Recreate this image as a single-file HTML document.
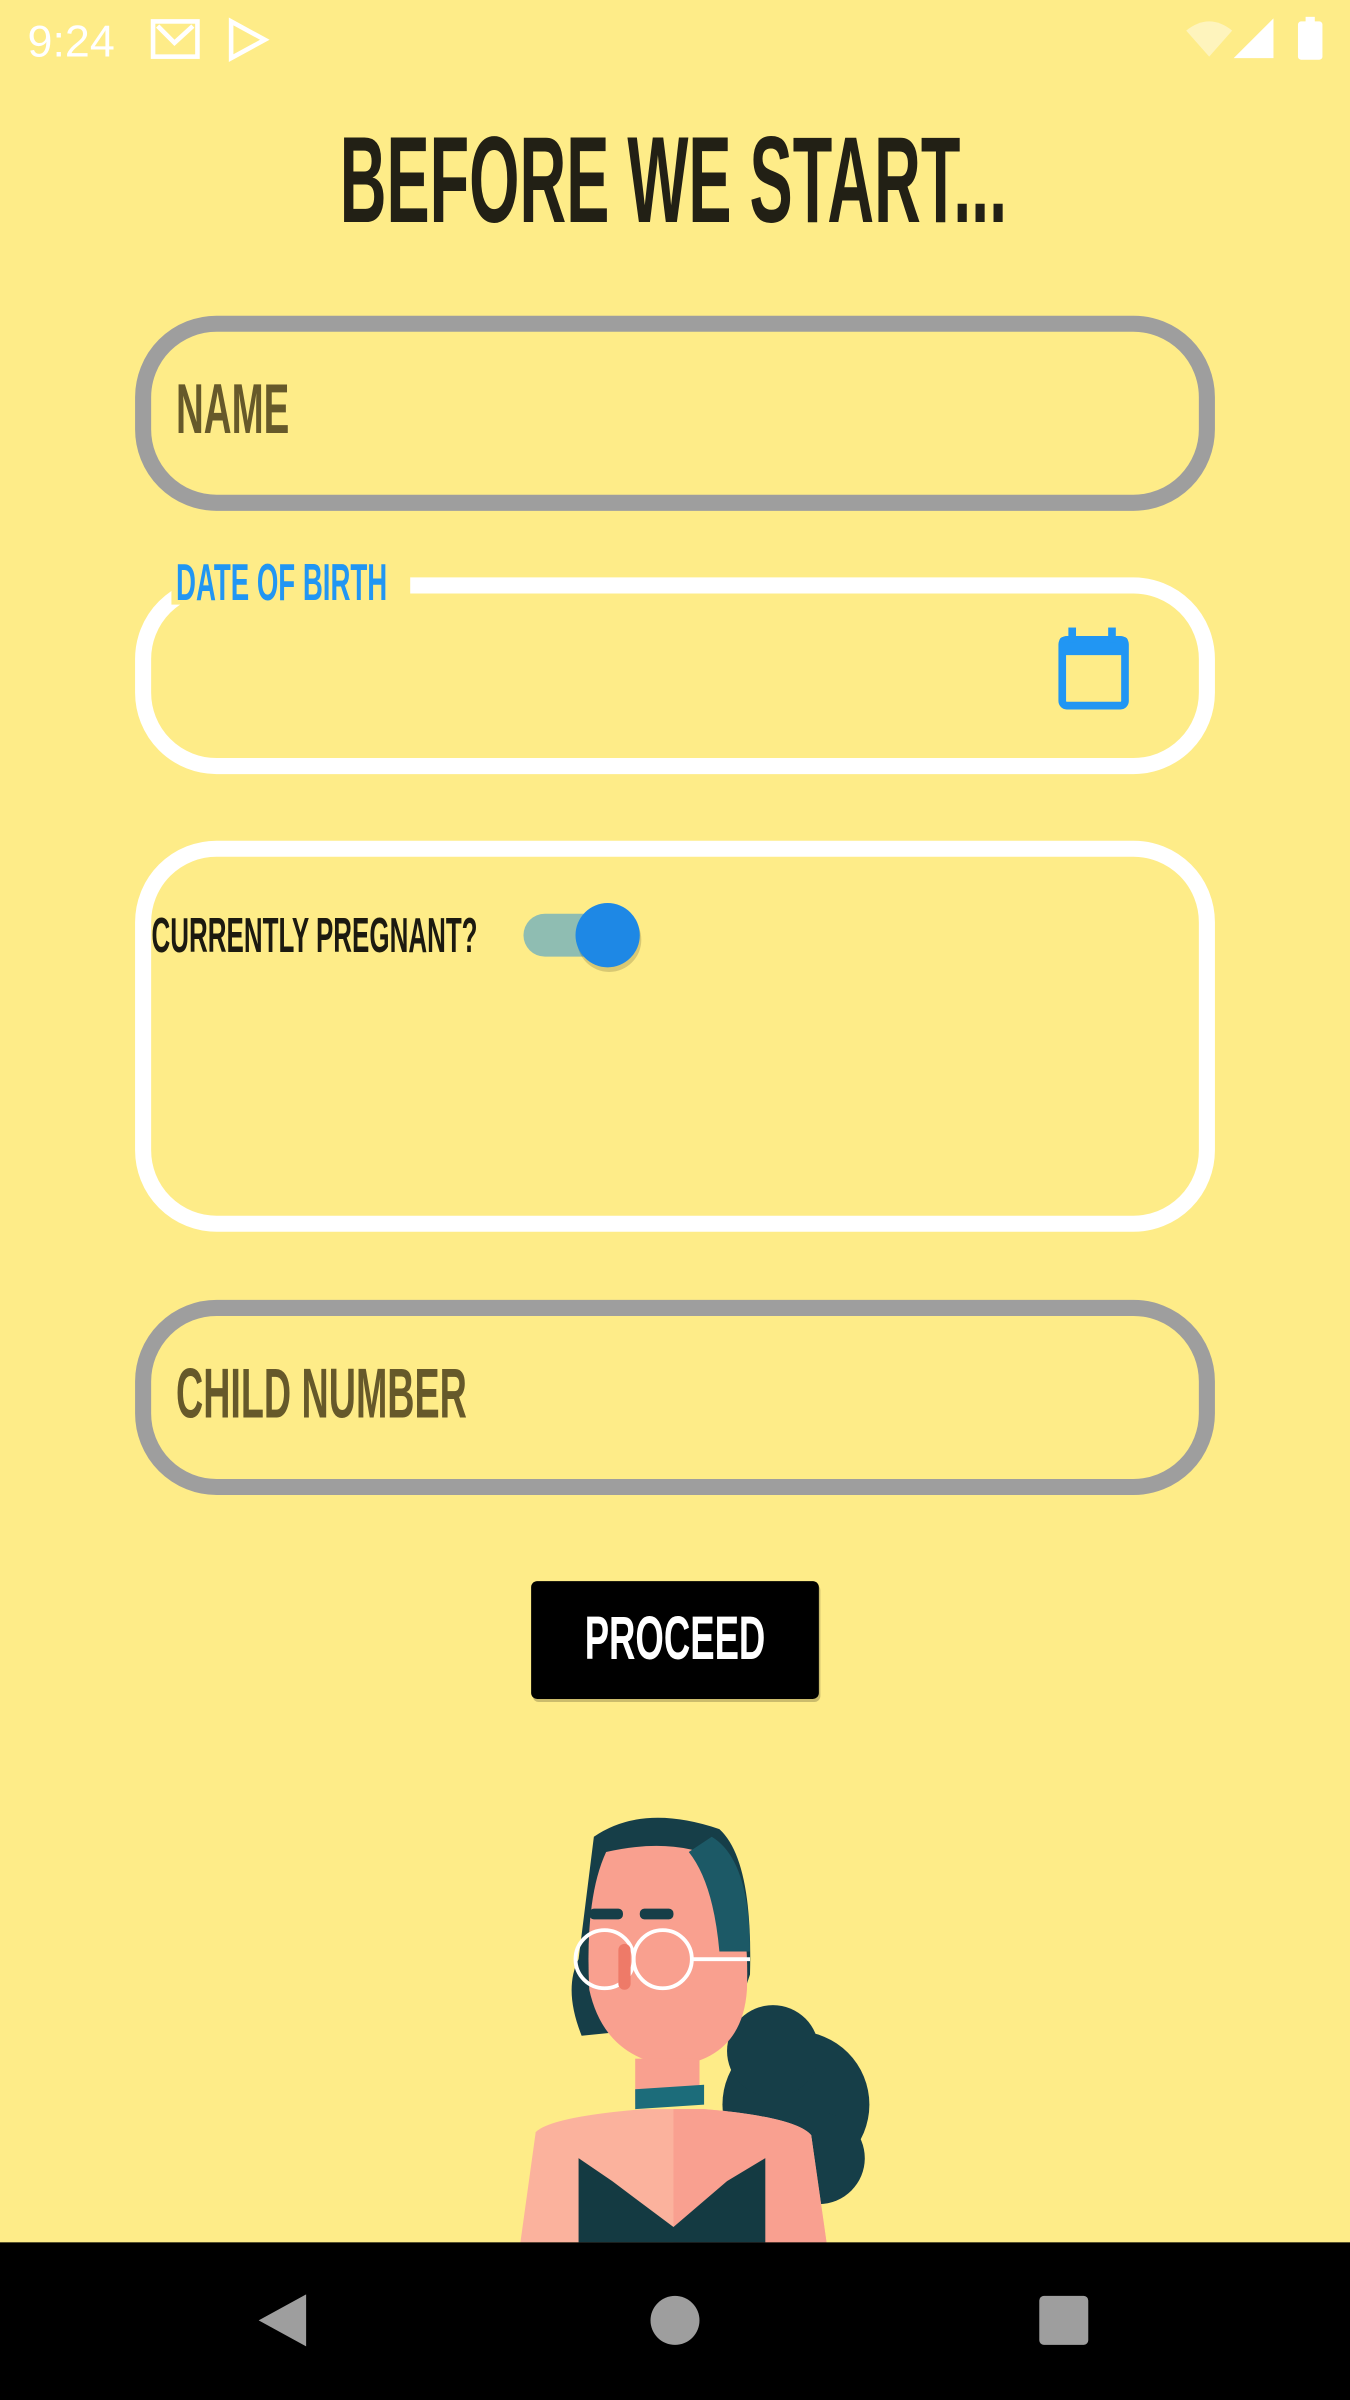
<!DOCTYPE html>
<html><head><meta charset="utf-8"><style>
html,body{margin:0;padding:0;background:#FEEC88;width:1350px;height:2400px;overflow:hidden}
svg{display:block}
text{font-family:"Liberation Sans",sans-serif;font-weight:bold}
</style></head><body>
<svg width="1350" height="2400" viewBox="0 0 882 1568" xmlns="http://www.w3.org/2000/svg">
<rect width="882" height="1568" fill="#FEEC88"/>
<!-- status bar -->
<text x="18" y="37" font-size="29" font-weight="normal" style="font-weight:normal" fill="#fff" textLength="57" lengthAdjust="spacingAndGlyphs">9:24</text>
<rect x="100" y="14" width="29" height="23" fill="none" stroke="#fff" stroke-width="3"/>
<path d="M103 17 L114 28 L126 17" fill="none" stroke="#fff" stroke-width="3"/>
<path d="M151 14 L173 26 L151 38 Z" fill="none" stroke="#fff" stroke-width="3"/>
<path d="M775 20 Q790 8 805 20 L790 37 Z" fill="#fff" opacity="0.45"/>
<path d="M806 38 L832 12 L832 38 Z" fill="#fff"/>
<rect x="848" y="14" width="16" height="25" rx="2" fill="#fff"/>
<rect x="853" y="11" width="6" height="4" fill="#fff"/>
<!-- title -->
<text x="222" y="145" font-size="80" fill="#222015" textLength="436" lengthAdjust="spacingAndGlyphs">BEFORE WE START...</text>
<!-- name -->
<rect x="93.5" y="211.5" width="695" height="117" rx="48" fill="none" stroke="#9E9E9E" stroke-width="10.5"/>
<text x="115" y="283" font-size="46" fill="#66592A" textLength="74" lengthAdjust="spacingAndGlyphs">NAME</text>
<!-- dob -->
<rect x="93.5" y="382.5" width="695" height="118" rx="48" fill="none" stroke="#fff" stroke-width="10.5"/>
<rect x="112" y="370" width="156" height="25" fill="#FEEC88"/>
<text x="115" y="392" font-size="34" fill="#2196F3" textLength="138" lengthAdjust="spacingAndGlyphs">DATE OF BIRTH</text>
<rect x="694" y="418" width="41" height="43" rx="3" fill="none" stroke="#2196F3" stroke-width="5"/>
<rect x="692" y="416" width="45" height="12" rx="3" fill="#2196F3"/>
<rect x="698" y="410" width="5" height="10" fill="#2196F3"/>
<rect x="724" y="410" width="5" height="10" fill="#2196F3"/>
<!-- pregnant -->
<rect x="93.5" y="554.5" width="695" height="245" rx="48" fill="none" stroke="#fff" stroke-width="10.5"/>
<text x="99" y="622" font-size="32" fill="#1c1a10" textLength="213" lengthAdjust="spacingAndGlyphs">CURRENTLY PREGNANT?</text>
<rect x="342" y="597" width="68" height="28" rx="14" fill="#8FBDB2"/>
<circle cx="398" cy="614" r="21" fill="#000" opacity="0.15"/>
<circle cx="397" cy="611" r="21" fill="#1E88E5"/>
<!-- child -->
<rect x="93.5" y="854.5" width="695" height="117" rx="48" fill="none" stroke="#9E9E9E" stroke-width="10.5"/>
<text x="115" y="926" font-size="46" fill="#66592A" textLength="190" lengthAdjust="spacingAndGlyphs">CHILD NUMBER</text>
<!-- proceed -->
<rect x="348" y="1035" width="188" height="77" rx="4" fill="#000" opacity="0.2"/>
<rect x="347" y="1033" width="188" height="77" rx="4" fill="#000"/>
<text x="382" y="1084" font-size="40" fill="#fff" textLength="118" lengthAdjust="spacingAndGlyphs">PROCEED</text>
<!-- girl -->
<g>
<circle cx="520" cy="1375" r="48" fill="#163E48"/>
<circle cx="505" cy="1340" r="30" fill="#163E48"/>
<circle cx="535" cy="1410" r="30" fill="#163E48"/>
<path d="M388 1200 Q420 1178 470 1195 Q492 1215 490 1290 L480 1320 L380 1330 Q368 1300 378 1280 Z" fill="#163E48"/>
<path d="M396 1210 Q440 1200 470 1215 Q490 1240 488 1300 Q485 1345 440 1350 Q395 1345 385 1300 Q382 1240 396 1210 Z" fill="#F9A08F"/>
<path d="M465 1200 Q490 1215 490 1275 L470 1275 Q466 1230 450 1210 Z" fill="#1C5966"/>
<rect x="415" y="1345" width="42" height="30" fill="#F9A08F"/>
<path d="M415 1365 L460 1362 L460 1375 L415 1378 Z" fill="#1C6C7A"/>
<path d="M350 1393 Q360 1383 420 1378 L460 1378 Q520 1383 530 1395 L540 1465 L340 1465 Z" fill="#FBB29D"/>
<path d="M440 1378 L460 1378 Q520 1383 530 1395 L540 1465 L440 1465 Z" fill="#F9A090"/>
<path d="M378 1465 L378 1410 L400 1425 L440 1455 L475 1425 L500 1410 L500 1465 Z" fill="#143A42"/>
<circle cx="395" cy="1280" r="19" fill="none" stroke="#fff" stroke-width="2.5"/>
<circle cx="433" cy="1280" r="19" fill="none" stroke="#fff" stroke-width="2.5"/>
<line x1="452" y1="1280" x2="490" y2="1280" stroke="#fff" stroke-width="2.5"/>
<rect x="385" y="1247" width="22" height="7" rx="3" fill="#163E48"/>
<rect x="418" y="1247" width="22" height="7" rx="3" fill="#163E48"/>
<rect x="404" y="1270" width="8" height="30" rx="4" fill="#EE7A68"/>
</g>
<!-- nav -->
<rect x="0" y="1465" width="882" height="103" fill="#000"/>
<path d="M200 1499 L200 1533 L169 1516 Z" fill="#9E9E9E"/>
<circle cx="441" cy="1516" r="16" fill="#9E9E9E"/>
<rect x="679" y="1500" width="32" height="32" rx="3" fill="#9E9E9E"/>
</svg>
</body></html>
